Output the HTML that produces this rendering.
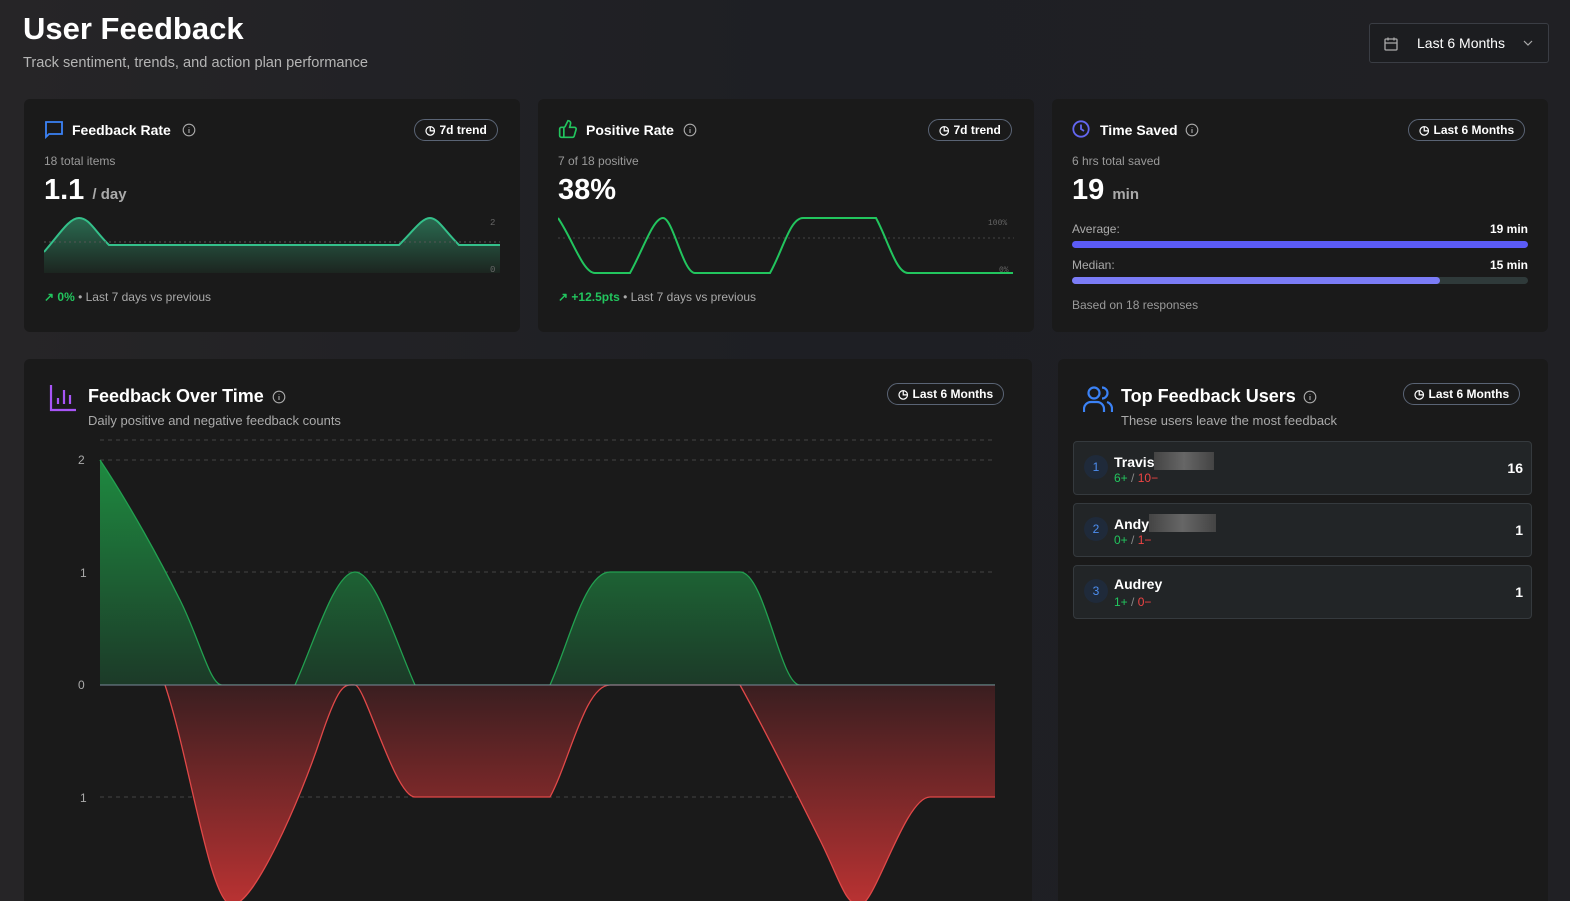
<!DOCTYPE html>
<html><head><meta charset="utf-8"><style>
*{box-sizing:border-box;margin:0;padding:0}
html{height:901px;overflow:hidden}
body{width:1570px;height:901px;overflow:hidden;background:linear-gradient(90deg,#262527,#1e1f24 50%,#202024);font-family:"Liberation Sans",sans-serif;color:#fff;position:relative}
.abs{position:absolute}
.card{position:absolute;background:#1a1a1a;border-radius:6px}
.pill{position:absolute;border:1px solid #5a6475;border-radius:12px;height:22px;font-size:12px;font-weight:bold;display:flex;align-items:center;gap:4px;padding:0 10px}
.t{font-weight:bold;font-size:14px}
.g{color:#9a9a9a;font-size:12px}
.row{position:absolute;left:1073px;width:459px;height:54px;background:#222527;border:1px solid #353a3e;border-radius:4px}
.num{position:absolute;left:10px;top:13px;width:24px;height:24px;border-radius:50%;background:#1f2a3a;color:#4d8ef0;font-size:12px;text-align:center;line-height:24px}
.nm{position:absolute;left:40px;top:10px;font-size:14px;font-weight:bold}
.sc{position:absolute;left:40px;top:29px;font-size:12px}
.cnt{position:absolute;right:8px;top:18px;font-size:14px;font-weight:bold}
.blur{display:inline-block;width:60px;height:18px;background:linear-gradient(90deg,#444,#666,#444);vertical-align:-3px}
</style></head><body>
<div class="abs" style="left:23px;top:11px;font-size:31px;font-weight:bold">User Feedback</div>
<div class="abs" style="left:23px;top:55px;font-size:14.6px;color:#b5b5b5">Track sentiment, trends, and action plan performance</div>
<div class="abs" style="left:1369px;top:23px;width:180px;height:40px;border:1px solid #3a3d44;border-radius:3px;background:#1c1d20">
<svg class="abs" style="left:13px;top:12px" width="16" height="16" viewBox="0 0 16 16" fill="none" stroke="#aaa" stroke-width="1.3"><rect x="2" y="3" width="12" height="11" rx="1"/><path d="M2 7h12M5 1.5v3M11 1.5v3"/></svg>
<div class="abs" style="left:47px;top:11px;font-size:14px">Last 6 Months</div>
<svg class="abs" style="left:153px;top:15px" width="10" height="8"><path d="M1 2l4 4 4-4" stroke="#aaa" fill="none" stroke-width="1.2"/></svg></div>

<!-- card1 -->
<div class="card" style="left:24px;top:99px;width:496px;height:233px"></div>
<svg class="abs" style="left:44px;top:120px" width="20" height="20" viewBox="0 0 20 20" fill="none" stroke="#3b82f6" stroke-width="1.8"><path d="M2 2h16v12H5l-3 3z"/></svg>
<div class="abs t" style="left:72px;top:122px">Feedback Rate</div>
<svg class="abs" style="left:182px;top:123px" width="14" height="14" viewBox="0 0 14 14" fill="none" stroke="#aaa" stroke-width="1.1"><circle cx="7" cy="7" r="5.8"/><path d="M7 6v4M7 4v.5"/></svg>
<div class="pill" style="left:414px;top:119px"><span>◷</span>7d trend</div>
<div class="abs g" style="left:44px;top:154px">18 total items</div>
<div class="abs" style="left:44px;top:174px;font-size:29px;font-weight:bold">1.1 <span style="font-size:15px;color:#aaa">/ day</span></div>
<svg class="abs" style="left:44px;top:210px" width="460" height="70">
<defs><linearGradient id="gf" x1="0" y1="0" x2="0" y2="1"><stop offset="0" stop-color="#2a6a50"/><stop offset="1" stop-color="#1c2520"/></linearGradient></defs>
<path d="M0 42C15 25 25 8 35 8S50 20 65 35H355C370 20 378 8 386 8S400 20 415 35H456V63H0Z" fill="url(#gf)"/>
<path d="M0 42C15 25 25 8 35 8S50 20 65 35H355C370 20 378 8 386 8S400 20 415 35H456" fill="none" stroke="#34c08a" stroke-width="2"/>
<path d="M0 32H456" stroke="#555" stroke-dasharray="2 3"/>
<text x="446" y="15" font-size="9" fill="#666" font-family="Liberation Mono">2</text><text x="446" y="62" font-size="9" fill="#666" font-family="Liberation Mono">0</text></svg>
<div class="abs" style="left:44px;top:290px;font-size:12px"><span style="color:#22c55e;font-weight:bold">↗ 0%</span> <span style="color:#aaa">• Last 7 days vs previous</span></div>

<!-- card2 -->
<div class="card" style="left:538px;top:99px;width:496px;height:233px"></div>
<svg class="abs" style="left:558px;top:119px" width="20" height="20" viewBox="0 0 24 24" fill="none" stroke="#22c55e" stroke-width="2"><path d="M7 10v12M15 5.9L14 10h5.8a2 2 0 0 1 1.9 2.6l-2.3 8A2 2 0 0 1 17.5 22H4a2 2 0 0 1-2-2v-8a2 2 0 0 1 2-2h2.8a2 2 0 0 0 1.8-1.1L12 2a3 3 0 0 1 3 3.9z"/></svg>
<div class="abs t" style="left:586px;top:122px">Positive Rate</div>
<svg class="abs" style="left:683px;top:123px" width="14" height="14" viewBox="0 0 14 14" fill="none" stroke="#aaa" stroke-width="1.1"><circle cx="7" cy="7" r="5.8"/><path d="M7 6v4M7 4v.5"/></svg>
<div class="pill" style="left:928px;top:119px"><span>◷</span>7d trend</div>
<div class="abs g" style="left:558px;top:154px">7 of 18 positive</div>
<div class="abs" style="left:558px;top:174px;font-size:29px;font-weight:bold">38%</div>
<svg class="abs" style="left:558px;top:210px" width="460" height="70">
<path d="M0 28H456" stroke="#444" stroke-dasharray="2 3"/>
<path d="M0 8C15 30 25 63 37 63H72C85 40 95 8 105 8S125 63 137 63H212C225 40 232 8 245 8H318C330 30 338 63 350 63H455" fill="none" stroke="#22c55e" stroke-width="2"/>
<text x="430" y="15" font-size="8" fill="#666" font-family="Liberation Mono">100%</text><text x="441" y="62" font-size="8" fill="#666" font-family="Liberation Mono">0%</text></svg>
<div class="abs" style="left:558px;top:290px;font-size:12px"><span style="color:#22c55e;font-weight:bold">↗ +12.5pts</span> <span style="color:#aaa">• Last 7 days vs previous</span></div>

<!-- card3 -->
<div class="card" style="left:1052px;top:99px;width:496px;height:233px"></div>
<svg class="abs" style="left:1072px;top:120px" width="18" height="18" viewBox="0 0 18 18" fill="none" stroke="#6366f1" stroke-width="1.8"><circle cx="9" cy="9" r="7.7"/><path d="M9 4.5V9l3 2"/></svg>
<div class="abs t" style="left:1100px;top:122px">Time Saved</div>
<svg class="abs" style="left:1185px;top:123px" width="14" height="14" viewBox="0 0 14 14" fill="none" stroke="#aaa" stroke-width="1.1"><circle cx="7" cy="7" r="5.8"/><path d="M7 6v4M7 4v.5"/></svg>
<div class="pill" style="left:1408px;top:119px"><span>◷</span>Last 6 Months</div>
<div class="abs g" style="left:1072px;top:154px">6 hrs total saved</div>
<div class="abs" style="left:1072px;top:174px;font-size:29px;font-weight:bold">19 <span style="font-size:15px;color:#aaa">min</span></div>
<div class="abs g" style="left:1072px;top:222px;color:#aaa">Average:</div><div class="abs" style="right:42px;top:222px;font-size:12px;font-weight:bold">19 min</div>
<div class="abs" style="left:1072px;top:241px;width:456px;height:7px;border-radius:4px;background:#5b5bf6"></div>
<div class="abs g" style="left:1072px;top:258px;color:#aaa">Median:</div><div class="abs" style="right:42px;top:258px;font-size:12px;font-weight:bold">15 min</div>
<div class="abs" style="left:1072px;top:277px;width:456px;height:7px;border-radius:4px;background:#2f3a3a"><div style="width:368px;height:7px;border-radius:4px;background:#7b7cf7"></div></div>
<div class="abs g" style="left:1072px;top:298px">Based on 18 responses</div>

<!-- big chart -->
<div class="card" style="left:24px;top:359px;width:1008px;height:542px;border-radius:6px 6px 0 0"></div>
<svg class="abs" style="left:49px;top:384px" width="28" height="28" viewBox="0 0 28 28" fill="none" stroke="#a855f7" stroke-width="2.2"><path d="M2 1v25h25M9 20v-6M15 20V6M21 20v-9"/></svg>
<div class="abs" style="left:88px;top:386px;font-size:18px;font-weight:bold">Feedback Over Time</div>
<svg class="abs" style="left:272px;top:390px" width="14" height="14" viewBox="0 0 14 14" fill="none" stroke="#aaa" stroke-width="1.1"><circle cx="7" cy="7" r="5.8"/><path d="M7 6v4M7 4v.5"/></svg>
<div class="abs g" style="left:88px;top:413px;font-size:13px;color:#aaa">Daily positive and negative feedback counts</div>
<div class="pill" style="left:887px;top:383px"><span>◷</span>Last 6 Months</div>
<svg class="abs" style="left:0;top:0" width="1040" height="901">
<defs><linearGradient id="gg" x1="0" y1="460" x2="0" y2="685" gradientUnits="userSpaceOnUse"><stop offset="0" stop-color="#1e8a40"/><stop offset="1" stop-color="#1c3a28"/></linearGradient>
<linearGradient id="rg" x1="0" y1="685" x2="0" y2="901" gradientUnits="userSpaceOnUse"><stop offset="0" stop-color="#3a1e20"/><stop offset="1" stop-color="#b83232"/></linearGradient></defs>
<g stroke="#444" stroke-dasharray="4 4"><path d="M100 440H995M100 460H995M100 572H995M100 797H995"/></g>
<g font-size="12" fill="#aaa"><text x="78" y="464">2</text><text x="80" y="577">1</text><text x="78" y="689">0</text><text x="80" y="802">1</text></g>
<path d="M100 460C130 505 160 560 180 600S210 685 222 685H295C315 640 335 572 355 572S395 640 415 685H550C570 640 585 572 610 572H740C765 572 780 685 800 685H995V685H100Z" fill="url(#gg)"/>
<path d="M100 460C130 505 160 560 180 600S210 685 222 685H295C315 640 335 572 355 572S395 640 415 685H550C570 640 585 572 610 572H740C765 572 780 685 800 685H995" fill="none" stroke="#22a050" stroke-width="1.3"/>
<path d="M165 685C190 760 210 905 232 905S300 800 320 740S345 685 355 685S395 797 415 797H550C570 760 585 685 610 685H740C765 730 800 800 820 840S845 905 860 905S905 797 930 797H995V685Z" fill="url(#rg)"/>
<path d="M165 685C190 760 210 905 232 905S300 800 320 740S345 685 355 685S395 797 415 797H550C570 760 585 685 610 685H740C765 730 800 800 820 840S845 905 860 905S905 797 930 797H995" fill="none" stroke="#e04848" stroke-width="1.3"/>
<path d="M100 685H995" stroke="#7a8a9a" stroke-width="1"/>
</svg>

<!-- top users -->
<div class="card" style="left:1058px;top:359px;width:490px;height:542px;border-radius:6px 6px 0 0"></div>
<svg class="abs" style="left:1083px;top:385px" width="30" height="28" viewBox="0 0 30 28" fill="none" stroke="#3b82f6" stroke-width="2.2"><circle cx="11" cy="8" r="5.5"/><path d="M1 27v-3a7 7 0 0 1 7-7h6a7 7 0 0 1 7 7v3M19 2.5a5.5 5.5 0 0 1 0 11M24 17a7 7 0 0 1 5 7v3"/></svg>
<div class="abs" style="left:1121px;top:386px;font-size:18px;font-weight:bold">Top Feedback Users</div>
<svg class="abs" style="left:1303px;top:390px" width="14" height="14" viewBox="0 0 14 14" fill="none" stroke="#aaa" stroke-width="1.1"><circle cx="7" cy="7" r="5.8"/><path d="M7 6v4M7 4v.5"/></svg>
<div class="abs g" style="left:1121px;top:413px;font-size:13px;color:#aaa">These users leave the most feedback</div>
<div class="pill" style="left:1403px;top:383px"><span>◷</span>Last 6 Months</div>
<div class="row" style="top:441px"><div class="num">1</div><div class="nm">Travis<span class="blur"></span></div><div class="sc"><span style="color:#22c55e">6+</span> <span style="color:#888">/</span> <span style="color:#ef4444">10−</span></div><div class="cnt">16</div></div>
<div class="row" style="top:503px"><div class="num">2</div><div class="nm">Andy<span class="blur" style="width:67px"></span></div><div class="sc"><span style="color:#22c55e">0+</span> <span style="color:#888">/</span> <span style="color:#ef4444">1−</span></div><div class="cnt">1</div></div>
<div class="row" style="top:565px"><div class="num">3</div><div class="nm">Audrey</div><div class="sc"><span style="color:#22c55e">1+</span> <span style="color:#888">/</span> <span style="color:#ef4444">0−</span></div><div class="cnt">1</div></div>
</body></html>
